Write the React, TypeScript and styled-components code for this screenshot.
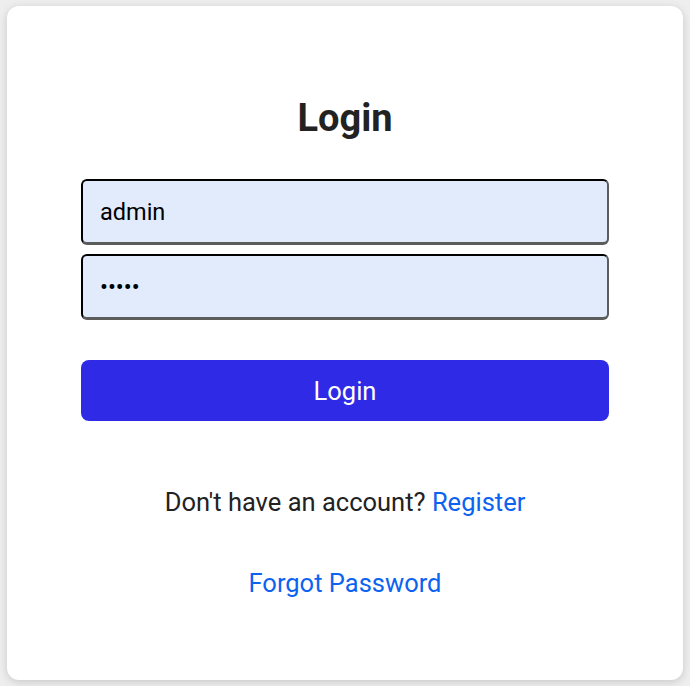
import React from "react";
import styled, { createGlobalStyle } from "styled-components";

const Global = createGlobalStyle`
  html, body { margin: 0; padding: 0; }
  body {
    background: #eeeeee;
    font-family: Roboto, "Liberation Sans", Arial, sans-serif;
  }
  * { box-sizing: border-box; }
`;

const Page = styled.div`
  width: 690px;
  height: 686px;
  padding: 6px 7px 6px 7px;
`;

const Card = styled.div`
  background: #ffffff;
  border-radius: 12px;
  box-shadow: 0 2px 8px rgba(0, 0, 0, 0.16);
  height: 674px;
  display: flex;
  flex-direction: column;
  align-items: center;
  padding: 88px 74px 0 74px;
`;

const Title = styled.h1`
  margin: 0 0 37px 0;
  font-size: 38px;
  line-height: 48px;
  font-weight: 700;
  color: #222222;
`;

const Form = styled.form`
  width: 100%;
  display: flex;
  flex-direction: column;
  gap: 9px;
`;

const Input = styled.input`
  width: 100%;
  height: 66px;
  border: 2px inset #5a5a5a;
  border-top-color: #1a1a1a;
  border-left-color: #1a1a1a;
  border-right-color: #5c5c5c;
  border-bottom-color: #5c5c5c;
  border-bottom-width: 3px;
  border-radius: 6px;
  background: #e2ebfc;
  padding: 0 17px;
  font-family: Roboto, "Liberation Sans", Arial, sans-serif;
  font-size: 23.5px;
  color: #000;
  outline: none;
`;

const Button = styled.button`
  margin-top: 31px;
  width: 100%;
  height: 61px;
  border: none;
  border-radius: 8px;
  background: #2f2ae6;
  color: #ffffff;
  font-family: Roboto, "Liberation Sans", Arial, sans-serif;
  font-size: 25.5px;
  cursor: pointer;
`;

const Line = styled.p<{ $top: number }>`
  margin: ${(p) => p.$top}px 0 0 0;
  font-size: 25.5px;
  line-height: 30px;
  color: #222222;
  text-align: center;
`;

const Link = styled.a`
  color: #0d63f0;
  text-decoration: none;
`;

export default function App() {
  return (
    <>
      <Global />
      <Page>
        <Card>
          <Title>Login</Title>
          <Form onSubmit={(e) => e.preventDefault()}>
            <Input type="text" defaultValue="admin" />
            <Input type="password" defaultValue="admin" />
            <Button type="submit">Login</Button>
          </Form>
          <Line $top={66}>
            Don't have an account? <Link href="#">Register</Link>
          </Line>
          <Line $top={51}>
            <Link href="#">Forgot Password</Link>
          </Line>
        </Card>
      </Page>
    </>
  );
}
